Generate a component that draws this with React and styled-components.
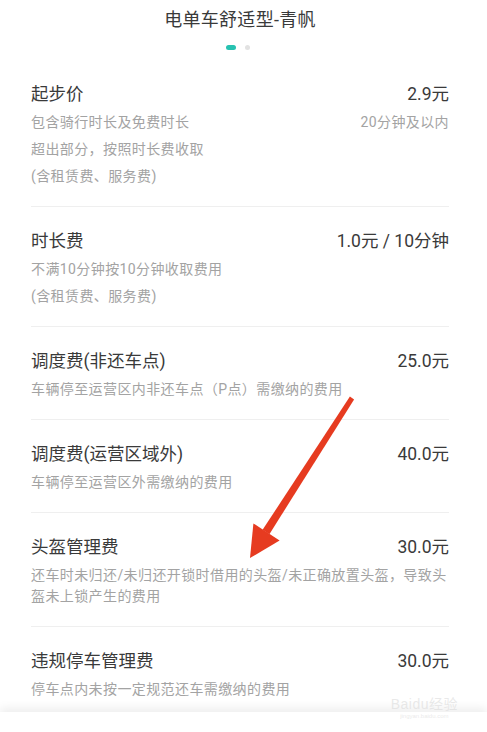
import React from 'react'
import styled, { createGlobalStyle } from 'styled-components'

const GlobalStyle = createGlobalStyle`
    html, body {
        margin: 0;
        padding: 0;
        background: #fff;
    }
    body {
        font-family: Roboto, "Noto Sans CJK SC", "Noto Sans", sans-serif;
        color: #3a3a3a;
    }
    p {
        margin: 0;
    }
`

const Page = styled.div`
    position: relative;
    height: 732px;
    display: flex;
    flex-direction: column;
    overflow: hidden;
    background: #fff;
`

const Scroller = styled.div`
    flex: 1;
    overflow: hidden;
    padding: 0 38px 0 31px;
`

const Header = styled.header`
    display: flex;
    flex-direction: column;
    align-items: center;
    padding-top: 8px;
`

const Title = styled.h1`
    margin: 0;
    font-size: 18px;
    line-height: 24px;
    font-weight: 400;
    color: #3a3a3a;
    letter-spacing: 0.3px;
`

const Dots = styled.div`
    display: flex;
    align-items: center;
    gap: 9px;
    margin-top: 13px;
    margin-left: -5px;
`

const Dot = styled.span`
    display: block;
    width: ${p => (p.$active ? '10px' : '5px')};
    height: 5px;
    border-radius: 3px;
    background: ${p => (p.$active ? '#27c2b1' : '#e2e2e2')};
`

const FeeList = styled.ul`
    list-style: none;
    margin: 0;
    padding: 0;
    margin-top: 8px;
`

const FeeItem = styled.li`
    padding: 22px 0 19px;
    border-bottom: 1px solid #efefef;

    &:first-child {
        padding-top: 24px;
    }

    &:last-child {
        border-bottom: none;
    }
`

const FeeHead = styled.div`
    display: flex;
    justify-content: space-between;
    align-items: center;
    font-size: 17.5px;
    line-height: 24px;
    color: #3a3a3a;
`

const FeeBody = styled.div`
    display: flex;
    flex-direction: column;
    gap: 6px;
    margin-top: 6px;
`

const SubRow = styled.div`
    display: flex;
    justify-content: space-between;
    font-size: 14px;
    line-height: 21px;
    letter-spacing: 0.4px;
    color: #a3a3a3;
    white-space: nowrap;
`

const BottomBar = styled.div`
    position: relative;
    z-index: 2;
    height: 20px;
    background: #fff;
    box-shadow: 0 -4px 10px rgba(0, 0, 0, 0.07);
`

const Overlay = styled.svg`
    position: absolute;
    left: 0;
    top: 0;
    pointer-events: none;
    z-index: 3;
`

const Watermark = styled.div`
    position: absolute;
    right: 29px;
    bottom: 13px;
    z-index: 3;
    display: flex;
    flex-direction: column;
    align-items: center;
    color: rgba(215, 215, 215, 0.55);
    font-family: "Liberation Sans", "Noto Sans CJK SC", sans-serif;
    line-height: 1;
    pointer-events: none;

    & > b {
        font-size: 14px;
        font-weight: 400;
        letter-spacing: 0.5px;
    }

    & > small {
        font-size: 6px;
        margin-top: 2px;
    }
`

const fees = [
    {
        name: '起步价',
        price: '2.9元',
        lines: [
            ['包含骑行时长及免费时长', '20分钟及以内'],
            ['超出部分，按照时长费收取'],
            ['(含租赁费、服务费)'],
        ],
    },
    {
        name: '时长费',
        price: '1.0元 / 10分钟',
        lines: [['不满10分钟按10分钟收取费用'], ['(含租赁费、服务费)']],
    },
    {
        name: '调度费(非还车点)',
        price: '25.0元',
        lines: [['车辆停至运营区内非还车点（P点）需缴纳的费用']],
    },
    {
        name: '调度费(运营区域外)',
        price: '40.0元',
        lines: [['车辆停至运营区外需缴纳的费用']],
    },
    {
        name: '头盔管理费',
        price: '30.0元',
        lines: [[
            <>还车时未归还/未归还开锁时借用的头盔/未正确放置头盔，导致头<br />盔未上锁产生的费用</>,
        ]],
    },
    {
        name: '违规停车管理费',
        price: '30.0元',
        lines: [['停车点内未按一定规范还车需缴纳的费用']],
    },
]

export default function App() {
    return (
        <>
            <GlobalStyle />
            <Page>
                <Scroller>
                    <Header>
                        <Title>电单车舒适型-青帆</Title>
                        <Dots>
                            <Dot $active />
                            <Dot />
                        </Dots>
                    </Header>
                    <FeeList>
                        {fees.map((fee) => (
                            <FeeItem key={fee.name}>
                                <FeeHead>
                                    <span>{fee.name}</span>
                                    <span>{fee.price}</span>
                                </FeeHead>
                                <FeeBody>
                                    {fee.lines.map((line, i) => (
                                        <SubRow key={i}>
                                            <p>{line[0]}</p>
                                            {line[1] && <p>{line[1]}</p>}
                                        </SubRow>
                                    ))}
                                </FeeBody>
                            </FeeItem>
                        ))}
                    </FeeList>
                </Scroller>
                <BottomBar />
                <Watermark>
                    <b>Baidu经验</b>
                    <small>jingyan.baidu.com</small>
                </Watermark>
                <Overlay width="487" height="732" viewBox="0 0 487 732">
                    <polygon
                        points="354.1,399.4 349.9,396.6 262.6,529.8 269.4,534.2"
                        fill="#e63b20"
                    />
                    <polygon
                        points="253.4,523.4 279.6,540.6 250,558"
                        fill="#e63b20"
                    />
                </Overlay>
            </Page>
        </>
    )
}
